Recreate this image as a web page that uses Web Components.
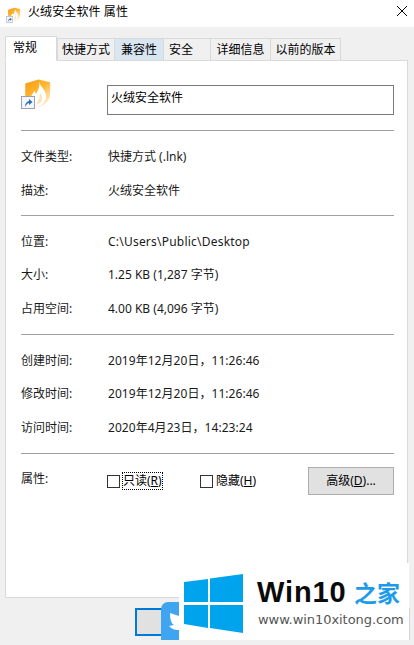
<!DOCTYPE html>
<html lang="zh-CN">
<head>
<meta charset="utf-8">
<title>火绒安全软件 属性</title>
<style>
    html, body { margin: 0; height: 100%; background: #f0f0f0; }
    body { font: 12px/16px "Noto Sans", "Noto Sans CJK SC", sans-serif; color: #000; overflow: hidden; }
</style>
</head>
<body>
<props-dialog>
    <title-bar>火绒安全软件 属性</title-bar>
    <tab-strip>
        <prop-tab active style="--w:52px">常规</prop-tab>
        <prop-tab style="--w:58px">快捷方式</prop-tab>
        <prop-tab hover style="--w:50px">兼容性</prop-tab>
        <prop-tab style="--w:48px;--pr:12px">安全</prop-tab>
        <prop-tab style="--w:61px">详细信息</prop-tab>
        <prop-tab style="--w:71px">以前的版本</prop-tab>
    </tab-strip>
    <prop-panel>
        <name-head value="火绒安全软件"></name-head>
        <prop-section>
            <prop-row label="文件类型:">快捷方式 (.lnk)</prop-row>
            <prop-row label="描述:">火绒安全软件</prop-row>
        </prop-section>
        <prop-section style="--row:33.5px;--pb:9.5px">
            <prop-row label="位置:"><span style="letter-spacing:.22px">C:\Users\Public\Desktop</span></prop-row>
            <prop-row label="大小:">1.25 KB (1,287 字节)</prop-row>
            <prop-row label="占用空间:">4.00 KB (4,096 字节)</prop-row>
        </prop-section>
        <prop-section style="--row:33.5px;--pb:9.5px">
            <prop-row label="创建时间:"><span style="letter-spacing:.05px">2019年12月20日，11:26:46</span></prop-row>
            <prop-row label="修改时间:"><span style="letter-spacing:.05px">2019年12月20日，11:26:46</span></prop-row>
            <prop-row label="访问时间:"><span style="letter-spacing:.05px">2020年4月23日，14:23:24</span></prop-row>
        </prop-section>
        <attr-row></attr-row>
    </prop-panel>
    <dialog-footer></dialog-footer>
</props-dialog>
<win-watermark></win-watermark>

<script>
const FIRE_ICON = `
    <svg class="fire" viewBox="0 0 32 32" aria-hidden="true">
        <defs>
            <linearGradient id="sh" x1="0" y1="0" x2="0.75" y2="1">
                <stop offset="0" stop-color="#f79a16"/>
                <stop offset="0.5" stop-color="#ffb62e"/>
                <stop offset="1" stop-color="#fff0d6"/>
            </linearGradient>
        </defs>
        <path d="M2.500 5 L17 0.500 L30 3.500 V17 C30 24 23 29 15.500 31.500 C8 29 2.500 24 2.500 17 Z" fill="url(#sh)"/>
        <path d="M18 3 C19 9 26 12 25.500 20 C25 25.500 20 29 15.500 31.500 C10 29.500 7.500 26 8 22 C8.500 18.500 11 16 12.500 13 C13.500 14.500 14 15.500 14.300 16.500 C16.500 13 18.500 9 18 3 Z" fill="#fff"/>
        <path d="M17.500 22 C19 19 19 17.500 18.500 15 C21 18 22 21 20.500 24 C19.500 26 18 27.500 16 28 C15 26 16 24 17.500 22 Z" fill="#fde3b8"/>
    </svg>`;

const shortcutBadge = `
    <svg class="badge" viewBox="0 0 14 13" aria-hidden="true">
        <rect x="0.500" y="0.500" width="13" height="12" fill="#f4f6f9" stroke="#9aa3ad"/>
        <path d="M4 11 C4 7.500 5.500 5.500 8 5 V3 L11.500 6 L8 9 V7 C6.500 7.200 5.300 8.600 4 11 Z" fill="#2a6cb8"/>
    </svg>`;

class TitleBar extends HTMLElement {
    constructor() {
        super();
        this.attachShadow({ mode: 'open' }).innerHTML = `
            <style>
                :host { display: flex; align-items: center; height: 27px; background: #fff; padding-left: 6px; }
                .ico { position: relative; width: 16px; height: 16px; margin-right: 5px; margin-top: 2px; flex: none; }
                .fire { position: absolute; left: 1px; top: 0; width: 14px; height: 15px; }
                .badge { position: absolute; left: 0; top: 9px; width: 7px; height: 7px; }
                .txt { flex: 1; letter-spacing: 0.1px; padding-left: 1px; margin-top: -3px; }
                .x { width: 10px; height: 10px; margin: -5px 7px 0 0; }
            </style>
            <span class="ico">${FIRE_ICON}${shortcutBadge}</span>
            <span class="txt"><slot></slot></span>
            <svg class="x" viewBox="0 0 10 10"><path d="M0 0 L10 10 M10 0 L0 10" stroke="#000" stroke-width="1" fill="none"/></svg>`;
    }
}

class TabStrip extends HTMLElement {
    constructor() {
        super();
        this.attachShadow({ mode: 'open' }).innerHTML = `
            <style>
                :host { display: flex; align-items: flex-end; height: 34px; padding-left: 5px; position: relative; z-index: 1; margin-bottom: -1px; }
            </style>
            <slot></slot>`;
    }
}

class PropTab extends HTMLElement {
    constructor() {
        super();
        this.attachShadow({ mode: 'open' }).innerHTML = `
            <style>
                :host { display: block; box-sizing: border-box; width: var(--w); height: 23px; margin-left: -1px; padding-right: var(--pr, 0);
                        border: 1px solid #d9d9d9; background: #f0f0f0; text-align: center; line-height: 22px; white-space: nowrap; }
                :host(:first-child) { margin-left: 0; }
                :host([hover]) { background: #d8e6f2; }
                :host([active]) { height: 25px; background: #fff; border-bottom-color: #fff; line-height: 21px; margin-right: 1px; position: relative;
                                  text-align: left; padding-left: 7px; }
            </style>
            <slot></slot>`;
    }
}

class PropPanel extends HTMLElement {
    constructor() {
        super();
        this.attachShadow({ mode: 'open' }).innerHTML = `
            <style>
                :host { display: block; box-sizing: border-box; width: 403px; height: 538px; margin-left: 5px;
                        background: #fff; border: 1px solid #d9d9d9; padding: 0 13px 0 15px; }
            </style>
            <slot></slot>`;
    }
}

class NameHead extends HTMLElement {
    constructor() {
        super();
        const value = this.getAttribute('value') || '';
        this.attachShadow({ mode: 'open' }).innerHTML = `
            <style>
                :host { display: flex; align-items: flex-start; height: 69px; box-sizing: border-box; padding-top: 17px; }
                .ico { position: relative; width: 86px; height: 33px; flex: none; }
                .fire { position: absolute; left: 2px; top: 0; width: 29px; height: 31px; }
                .badge { position: absolute; left: 0; top: 18px; width: 14px; height: 13px; }
                .box { box-sizing: border-box; flex: 1; height: 30px; margin-top: 7px; border: 1px solid #7a7a7a;
                       padding: 4px 3px; line-height: 16px; }
            </style>
            <div class="ico">${FIRE_ICON}${shortcutBadge}</div>
            <div class="box">${value}</div>`;
    }
}

class PropSection extends HTMLElement {
    constructor() {
        super();
        this.attachShadow({ mode: 'open' }).innerHTML = `
            <style>
                :host { display: block; border-top: 1px solid #a0a0a0; padding: 8px 0 var(--pb, 8px); }
            </style>
            <slot></slot>`;
    }
}

class PropRow extends HTMLElement {
    constructor() {
        super();
        const label = this.getAttribute('label') || '';
        this.attachShadow({ mode: 'open' }).innerHTML = `
            <style>
                :host { display: flex; align-items: center; box-sizing: border-box; height: var(--row, 34px); padding-top: 2px; color: #1a1a1a; }
                .k { width: 87px; flex: none; }
            </style>
            <span class="k">${label}</span><span><slot></slot></span>`;
    }
}

class AttrRow extends HTMLElement {
    constructor() {
        super();
        this.attachShadow({ mode: 'open' }).innerHTML = `
            <style>
                :host { display: flex; align-items: flex-start; border-top: 1px solid #a0a0a0; padding-top: 13px; height: 40px; }
                .k { width: 86px; flex: none; margin-top: 4px; color: #1a1a1a; }
                .check { display: flex; align-items: center; height: 18px; margin-top: 5px; }
                .check i { box-sizing: border-box; width: 13px; height: 13px; border: 1px solid #333; background: #fff; flex: none; }
                .check span { margin-left: 2px; padding: 0 1px; height: 18px; line-height: 18px; box-sizing: border-box; white-space: nowrap; }
                .focus span { outline: 1px dotted #000; outline-offset: -1px; }
                .one { width: 93px; }
                .two { width: 108px; }
                button { box-sizing: border-box; width: 86px; height: 28px; padding: 0; background: #e1e1e1; border: 1px solid #adadad;
                         font: inherit; color: #000; }
            </style>
            <span class="k">属性:</span>
            <div class="check focus one"><i></i><span>只读(<u>R</u>)</span></div>
            <div class="check two"><i></i><span>隐藏(<u>H</u>)</span></div>
            <button>高级(<u>D</u>)...</button>`;
    }
}

class DialogFooter extends HTMLElement {
    constructor() {
        super();
        this.attachShadow({ mode: 'open' }).innerHTML = `
            <style>
                :host { display: block; padding: 10px 0 0 135px; }
                .btn { box-sizing: border-box; width: 75px; height: 28px; background: #e1e1e1; border: 2px solid #0078d7; }
            </style>
            <div class="btn"></div>`;
    }
}

class PropsDialog extends HTMLElement {
    constructor() {
        super();
        this.attachShadow({ mode: 'open' }).innerHTML = `
            <style>:host { display: block; width: 414px; height: 645px; }</style>
            <slot></slot>`;
    }
}

class WinWatermark extends HTMLElement {
    constructor() {
        super();
        this.attachShadow({ mode: 'open' }).innerHTML = `
            <style>
                :host { position: absolute; left: 179px; top: 563px; width: 230px; height: 77px; background: #fff; display: block; }
                :host::after { content: ""; position: absolute; left: 230px; top: 45px; width: 1px; height: 32px; background: #d4d4d4; }
                .bird { position: absolute; left: -18px; top: 39px; width: 18px; height: 38px; background: #3fa5f0; border-top-left-radius: 7px; overflow: hidden; }
                .bird svg { position: absolute; left: 0; top: 0; width: 18px; height: 38px; }
                .logo { position: absolute; left: 0; top: 0; width: 70px; height: 77px; }
                .name { position: absolute; left: 78px; top: 13px; font: bold 29px/32px "Liberation Sans", Arial, sans-serif; color: #0a0a0a; letter-spacing: 0.9px; white-space: nowrap; }
                .zh { position: absolute; left: 175px; top: 14px; font: bold 23px/30px "Noto Sans CJK SC", sans-serif; color: #1e9be8; white-space: nowrap; }
                .url { position: absolute; left: 79px; top: 48px; font: 13px/18px "DejaVu Sans", sans-serif; color: #555; white-space: nowrap; letter-spacing: -0.05px; }
            </style>
            <div class="bird">
                <svg viewBox="0 0 18 38"><path d="M9 11 L18 14 V28 C13 28 11 27 8 24 L13 23 C10 21 9 17 9 11 Z" fill="#fff"/></svg>
            </div>
            <svg class="logo" viewBox="0 0 70 77">
                <path d="M5 19 L29 16 V39 H5 Z M31 15.500 L64 11 V39 H31 Z M5 42 H29 V65 L5 61 Z M31 42 H64 V70 L31 65 Z" fill="#00a4ec"/>
            </svg>
            <span class="name">Win10</span>
            <span class="zh">之家</span>
            <span class="url">www.win10xitong.com</span>`;
    }
}

customElements.define('title-bar', TitleBar);
customElements.define('tab-strip', TabStrip);
customElements.define('prop-tab', PropTab);
customElements.define('prop-panel', PropPanel);
customElements.define('name-head', NameHead);
customElements.define('prop-section', PropSection);
customElements.define('prop-row', PropRow);
customElements.define('attr-row', AttrRow);
customElements.define('dialog-footer', DialogFooter);
customElements.define('props-dialog', PropsDialog);
customElements.define('win-watermark', WinWatermark);
</script>
</body>
</html>
